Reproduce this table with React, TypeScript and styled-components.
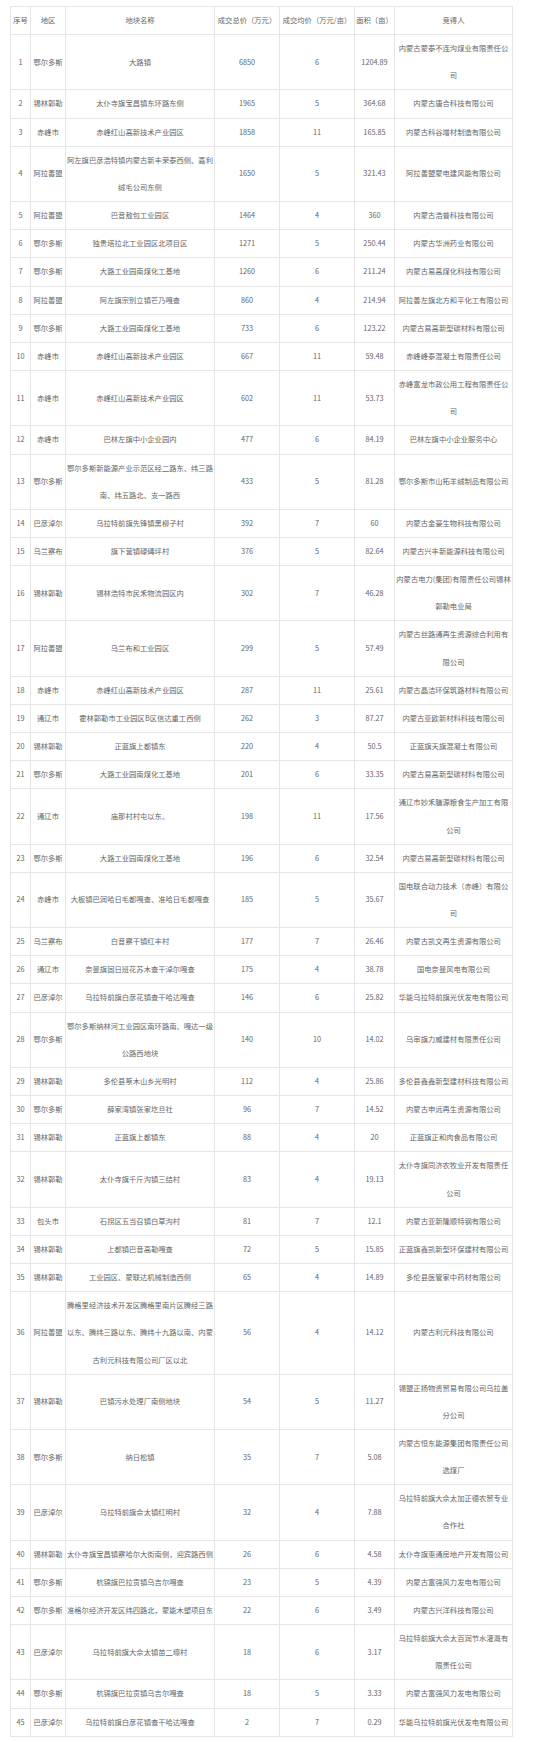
import React from "react"
import styled, { createGlobalStyle } from "styled-components"

type Row = [number, string, string, string, string, string, string]

const rows: Row[] = [
  [1, "鄂尔多斯", "大路镇", "6850", "6", "1204.89", "内蒙古蒙泰不连沟煤业有限责任公司"],
  [2, "锡林郭勒", "太仆寺旗宝昌镇东环路东侧", "1965", "5", "364.68", "内蒙古唐合科技有限公司"],
  [3, "赤峰市", "赤峰红山高新技术产业园区", "1858", "11", "165.85", "内蒙古科谷增材制造有限公司"],
  [4, "阿拉善盟", "阿左旗巴彦浩特镇内蒙古新丰荣泰西侧、嘉利绒毛公司东侧", "1650", "5", "321.43", "阿拉善盟蒙电建风能有限公司"],
  [5, "阿拉善盟", "巴音敖包工业园区", "1464", "4", "360", "内蒙古浩普科技有限公司"],
  [6, "鄂尔多斯", "独贵塔拉北工业园区北项目区", "1271", "5", "250.44", "内蒙古华洲药业有限公司"],
  [7, "鄂尔多斯", "大路工业园南煤化工基地", "1260", "6", "211.24", "内蒙古易高煤化科技有限公司"],
  [8, "阿拉善盟", "阿左旗宗别立镇芒乃嘎查", "860", "4", "214.94", "阿拉善左旗北方和平化工有限公司"],
  [9, "鄂尔多斯", "大路工业园南煤化工基地", "733", "6", "123.22", "内蒙古易高新型碳材料有限公司"],
  [10, "赤峰市", "赤峰红山高新技术产业园区", "667", "11", "59.48", "赤峰峰泰混凝土有限责任公司"],
  [11, "赤峰市", "赤峰红山高新技术产业园区", "602", "11", "53.73", "赤峰富龙市政公用工程有限责任公司"],
  [12, "赤峰市", "巴林左旗中小企业园内", "477", "6", "84.19", "巴林左旗中小企业服务中心"],
  [13, "鄂尔多斯", "鄂尔多斯新能源产业示范区经二路东、纬三路南、纬五路北、支一路西", "433", "5", "81.28", "鄂尔多斯市山拓羊绒制品有限公司"],
  [14, "巴彦淖尔", "乌拉特前旗先锋镇黑柳子村", "392", "7", "60", "内蒙古金豪生物科技有限公司"],
  [15, "乌兰察布", "旗下营镇碌碡坪村", "376", "5", "82.64", "内蒙古兴丰新能源科技有限公司"],
  [16, "锡林郭勒", "锡林浩特市民禾物流园区内", "302", "7", "46.28", "内蒙古电力(集团)有限责任公司锡林郭勒电业局"],
  [17, "阿拉善盟", "乌兰布和工业园区", "299", "5", "57.49", "内蒙古丝路通再生资源综合利用有限公司"],
  [18, "赤峰市", "赤峰红山高新技术产业园区", "287", "11", "25.61", "内蒙古晶洁环保筑路材料有限公司"],
  [19, "通辽市", "霍林郭勒市工业园区B区信达重工西侧", "262", "3", "87.27", "内蒙古亚欧新材料科技有限公司"],
  [20, "锡林郭勒", "正蓝旗上都镇东", "220", "4", "50.5", "正蓝旗天旗混凝土有限公司"],
  [21, "鄂尔多斯", "大路工业园南煤化工基地", "201", "6", "33.35", "内蒙古易高新型碳材料有限公司"],
  [22, "通辽市", "庙那村村屯以东。", "198", "11", "17.56", "通辽市妙禾膳源粮食生产加工有限公司"],
  [23, "鄂尔多斯", "大路工业园南煤化工基地", "196", "6", "32.54", "内蒙古易高新型碳材料有限公司"],
  [24, "赤峰市", "大板镇巴润哈日毛都嘎查、准哈日毛都嘎查", "185", "5", "35.67", "国电联合动力技术（赤峰）有限公司"],
  [25, "乌兰察布", "白音察干镇红丰村", "177", "7", "26.46", "内蒙古凯文再生资源有限公司"],
  [26, "通辽市", "奈曼旗固日班花苏木查干淖尔嘎查", "175", "4", "38.78", "国电奈曼风电有限公司"],
  [27, "巴彦淖尔", "乌拉特前旗白彦花镇查干哈达嘎查", "146", "6", "25.82", "华能乌拉特前旗光伏发电有限公司"],
  [28, "鄂尔多斯", "鄂尔多斯纳林河工业园区南环路南、嘎达一级公路西地块", "140", "10", "14.02", "乌审旗力威建材有限责任公司"],
  [29, "锡林郭勒", "多伦县蔡木山乡光明村", "112", "4", "25.86", "多伦县鑫鑫新型建材科技有限公司"],
  [30, "鄂尔多斯", "薛家湾镇张家圪旦社", "96", "7", "14.52", "内蒙古申远再生资源有限公司"],
  [31, "锡林郭勒", "正蓝旗上都镇东", "88", "4", "20", "正蓝旗正和肉食品有限公司"],
  [32, "锡林郭勒", "太仆寺旗千斤沟镇三结村", "83", "4", "19.13", "太仆寺旗同济农牧业开发有限责任公司"],
  [33, "包头市", "石拐区五当召镇白草沟村", "81", "7", "12.1", "内蒙古亚新隆顺特钢有限公司"],
  [34, "锡林郭勒", "上都镇巴音高勒嘎查", "72", "5", "15.85", "正蓝旗鑫凯新型环保建材有限公司"],
  [35, "锡林郭勒", "工业园区、蒙联达机械制造西侧", "65", "4", "14.89", "多伦县医管家中药材有限公司"],
  [36, "阿拉善盟", "腾格里经济技术开发区腾格里南片区腾经三路以东、腾纬三路以东、腾纬十九路以南、内蒙古利元科技有限公司厂区以北", "56", "4", "14.12", "内蒙古利元科技有限公司"],
  [37, "锡林郭勒", "巴镇污水处理厂南侧地块", "54", "5", "11.27", "锡盟正扬物资贸易有限公司乌拉盖分公司"],
  [38, "鄂尔多斯", "纳日松镇", "35", "7", "5.08", "内蒙古恒东能源集团有限责任公司选煤厂"],
  [39, "巴彦淖尔", "乌拉特前旗佘太镇红明村", "32", "4", "7.88", "乌拉特前旗大佘太加正德农贸专业合作社"],
  [40, "锡林郭勒", "太仆寺旗宝昌镇察哈尔大街南侧，迎宾路西侧", "26", "6", "4.58", "太仆寺旗惠通房地产开发有限公司"],
  [41, "鄂尔多斯", "杭锦旗巴拉贡镇乌吉尔嘎查", "23", "5", "4.39", "内蒙古富强风力发电有限公司"],
  [42, "鄂尔多斯", "准格尔经济开发区纬四路北，蒙能木塑项目东", "22", "6", "3.49", "内蒙古兴洋科技有限公司"],
  [43, "巴彦淖尔", "乌拉特前旗大佘太镇苗二壕村", "18", "6", "3.17", "乌拉特前旗大佘太百润节水灌溉有限责任公司"],
  [44, "鄂尔多斯", "杭锦旗巴拉贡镇乌吉尔嘎查", "18", "5", "3.33", "内蒙古富强风力发电有限公司"],
  [45, "巴彦淖尔", "乌拉特前旗白彦花镇查干哈达嘎查", "2", "7", "0.29", "华能乌拉特前旗光伏发电有限公司"],
]

const headers = ["序号", "地区", "地块名称", "成交总价（万元）", "成交均价（万元/亩）", "面积（亩）", "竞得人"]
const widths = [20, 35, 149, 65, 75, 40, 118]

const GlobalStyle = createGlobalStyle`
  html, body {
    margin: 0;
    padding: 0;
    background: #ffffff;
  }
`

const Page = styled.div`
  padding: 6px 0 5px 10px;
  font-family: "Noto Sans CJK SC", "Noto Sans", sans-serif;
`

const Table = styled.table`
  border-collapse: collapse;
  table-layout: fixed;
  width: 502px;
  color: #666666;
  font-size: 7.3px;
`

const Cell = styled.td`
  border: 1px solid #e6e6e6;
  padding: 0 1px;
  line-height: 27.16px;
  text-align: center;
  vertical-align: middle;
  font-weight: normal;
  word-break: break-all;
`

const HeadCell = styled(Cell).attrs({ as: "th" })``

const App = () => {
  return (
    <>
      <GlobalStyle />
      <Page>
        <Table>
          <colgroup>
            {widths.map((w, i) => (
              <col key={i} style={{ width: w }} />
            ))}
          </colgroup>
          <thead>
            <tr>
              {headers.map((h) => (
                <HeadCell key={h}>{h}</HeadCell>
              ))}
            </tr>
          </thead>
          <tbody>
            {rows.map((r) => (
              <tr key={r[0]}>
                {r.map((v, i) => (
                  <Cell key={i}>{v}</Cell>
                ))}
              </tr>
            ))}
          </tbody>
        </Table>
      </Page>
    </>
  )
}

export default App
